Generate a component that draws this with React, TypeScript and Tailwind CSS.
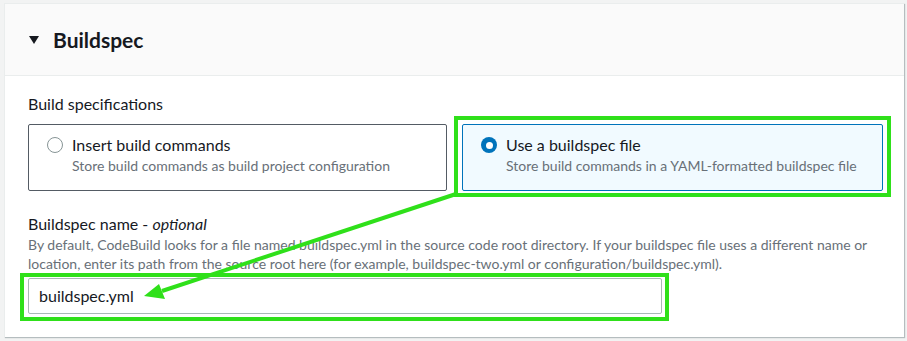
import React from "react";

function Radio({ checked }: { checked: boolean }) {
  return checked ? (
    <span className="mt-[3px] flex h-[16px] w-[16px] shrink-0 items-center justify-center rounded-full bg-[#0073bb]">
      <span className="h-[7px] w-[7px] rounded-full bg-white" />
    </span>
  ) : (
    <span className="mt-[3px] h-[16px] w-[16px] shrink-0 rounded-full border-[1.5px] border-[#879596] bg-white" />
  );
}

function Tile({ title, desc, checked }: { title: string; desc: string; checked: boolean }) {
  return (
    <div
      className={
        checked
          ? "flex h-[67px] gap-[9px] rounded-[2px] border border-[#0073bb] bg-[#f1faff] pl-[18px] pt-[9px]"
          : "flex h-[67px] gap-[9px] rounded-[2px] border border-[#545b64] bg-white pl-[18px] pt-[9px]"
      }
    >
      <Radio checked={checked} />
      <div>
        <div className="text-[16px] leading-[22px] text-[#16191f]">{title}</div>
        <div className="text-[14px] leading-[20px] text-[#687078]">{desc}</div>
      </div>
    </div>
  );
}

export default function App() {
  return (
    <div
      className="relative h-[341px] w-[907px] overflow-hidden bg-[#f2f3f3] pl-[4px] pr-[3px] pt-[3px]"
      style={{ fontFamily: "Lato, 'Noto Sans', sans-serif" }}
    >
      <div className="h-[334px] border-l border-t border-[#eaeded] bg-white shadow-[1px_1px_1px_0_rgba(0,28,36,0.25)]">
        {/* header */}
        <div className="flex h-[72px] items-center gap-[13px] border-b border-[#eaeded] bg-[#fafafa] pl-[23px]">
          <svg width="12" height="10" viewBox="0 0 12 10">
            <polygon points="1,1 11,1 6,9" fill="#16191f" />
          </svg>
          <h2 className="text-[21px] font-bold leading-[24px] text-[#16191f]">Buildspec</h2>
        </div>

        {/* body */}
        <div className="pl-[23px] pr-[20px] pt-[17px]">
          <div className="text-[16px] leading-[22px] text-[#16191f]">Build specifications</div>
          <div className="mt-[9px] grid grid-cols-[419px_421px] gap-[15px]">
            <Tile
              checked={false}
              title="Insert build commands"
              desc="Store build commands as build project configuration"
            />
            <Tile
              checked={true}
              title="Use a buildspec file"
              desc="Store build commands in a YAML-formatted buildspec file"
            />
          </div>

          <div className="mt-[22px] text-[16px] leading-[22px] text-[#16191f]">
            Buildspec name - <i>optional</i>
          </div>
          <p className="w-[850px] text-[14px] leading-[19px] text-[#687078]">
            By default, CodeBuild looks for a file named buildspec.yml in the source code root directory. If your
            buildspec file uses a different name or location, enter its path from the source root here (for example,
            buildspec-two.yml or configuration/buildspec.yml).
          </p>
          <div className="mt-[5px] flex h-[36px] w-[634px] items-center rounded-[2px] border border-[#aab7b8] bg-white pl-[10px] text-[16px] text-[#16191f]">
            buildspec.yml
          </div>
        </div>
      </div>

      {/* annotation overlay */}
      <svg className="pointer-events-none absolute left-0 top-0" width="907" height="341" viewBox="0 0 907 341">
        <rect x="456" y="118" width="433" height="77" fill="none" stroke="#2fe01a" strokeWidth="4" />
        <rect x="22" y="275" width="645" height="44" fill="none" stroke="#2fe01a" strokeWidth="4" />
        <line x1="456" y1="194" x2="162" y2="291" stroke="#2fe01a" strokeWidth="4" />
        <polygon points="144,296 159,284 165,299" fill="#2fe01a" />
      </svg>
    </div>
  );
}
